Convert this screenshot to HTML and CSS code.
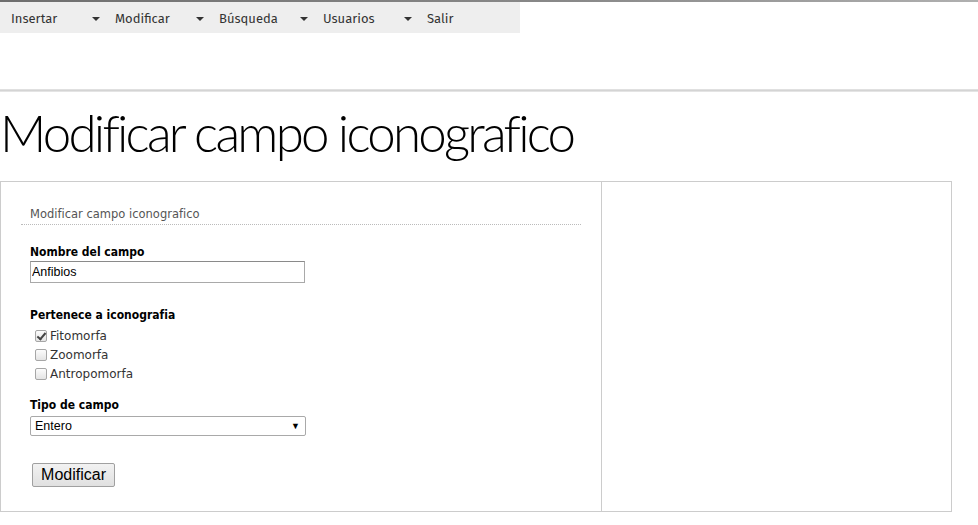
FILE: index.html
```html
<!DOCTYPE html>
<html lang="es">
<head>
<meta charset="utf-8">
<title>Modificar campo iconografico</title>
<link rel="stylesheet" href="styles.css">
</head>
<body>
<div class="topline"></div>
<header class="header">
  <nav class="menu">
    <div class="menu-item"><span>Insertar</span><span class="caret"></span></div>
    <div class="menu-item"><span>Modificar</span><span class="caret"></span></div>
    <div class="menu-item"><span>Búsqueda</span><span class="caret"></span></div>
    <div class="menu-item"><span>Usuarios</span><span class="caret"></span></div>
    <div class="menu-item"><span>Salir</span></div>
  </nav>
</header>
<div class="divider"></div>
<h1 class="title">Modificar campo iconografico</h1>
<div class="box">
  <div class="main">
    <form class="form">
      <div class="legend">Modificar campo iconografico</div>
      <label class="label">Nombre del campo</label>
      <input class="text" type="text" value="Anfibios">
      <label class="label label-gap">Pertenece a iconografia</label>
      <div class="checks">
        <div class="check"><input class="cb" type="checkbox" checked><span>Fitomorfa</span></div>
        <div class="check"><input class="cb" type="checkbox"><span>Zoomorfa</span></div>
        <div class="check"><input class="cb" type="checkbox"><span>Antropomorfa</span></div>
      </div>
      <label class="label label-gap2">Tipo de campo</label>
      <div class="select"><span>Entero</span><span class="sel-arrow">▼</span></div>
      <button class="btn" type="button">Modificar</button>
    </form>
  </div>
  <div class="side"></div>
</div>
</body>
</html>
```
FILE: styles.css
```css
html, body {
  margin: 0;
  padding: 0;
  background: #fff;
}
.topline {
  height: 2px;
  background: linear-gradient(to right, #6e6e6e, #8a8a8a 60%, #b0b0b0);
}
.header {
  height: 87px;
}
.menu {
  display: flex;
  width: 520px;
  height: 31px;
  background: #eeeeee;
  font-family: "Fira Sans", "Open Sans", "Noto Sans", sans-serif;
  font-size: 13px;
  color: #333;
}
.menu-item {
  width: 104px;
  display: flex;
  align-items: center;
  position: relative;
  padding-left: 11px;
  padding-top: 2px;
  box-sizing: border-box;
}
.caret {
  position: absolute;
  left: 92px;
  top: 15px;
  width: 0;
  height: 0;
  border-left: 4px solid transparent;
  border-right: 4px solid transparent;
  border-top: 4px solid #333;
}
.divider {
  height: 3px;
  background: linear-gradient(to bottom, #e6e6e6, #d4d4d4, #ececec);
}
.title {
  margin: 17px 0 0 0;
  height: 72px;
  font-family: "Lato", sans-serif;
  font-weight: 300;
  font-size: 51px;
  line-height: 48px;
  color: #000;
  letter-spacing: -2.75px;
}
.box {
  display: flex;
  width: 952px;
  height: 331px;
  border: 1px solid #cccccc;
  box-sizing: border-box;
}
.main {
  width: 601px;
  border-right: 1px solid #cccccc;
  padding: 21px 20px 0 20px;
  box-sizing: border-box;
}
.side {
  flex: 1;
}
.form {
  display: flex;
  flex-direction: column;
  align-items: flex-start;
  font-family: "DejaVu Sans", Verdana, sans-serif;
  font-size: 12px;
}
.legend {
  align-self: stretch;
  color: #555;
  font-size: 11.5px;
  padding: 4px 0 3px 9px;
  border-bottom: 1px dotted #bbb;
  margin-bottom: 19px;
}
.label {
  font-family: "DejaVu Sans Condensed", "DejaVu Sans", sans-serif;
  font-stretch: condensed;
  font-weight: bold;
  color: #000;
  margin-left: 9px;
  font-size: 12px;
  line-height: 16px;
}
.label-gap { margin-top: 24px; }
.label-gap2 { margin-top: 14px; }
.text {
  margin: 1px 0 0 9px;
  width: 275px;
  height: 22px;
  box-sizing: border-box;
  border: 1px solid #a9a9a9;
  border-top-color: #8a8a8a;
  padding: 1px 1px;
  font-family: "Liberation Sans", Arial, sans-serif;
  font-size: 12.5px;
  color: #000;
}
.checks {
  margin-top: 3px;
  display: flex;
  flex-direction: column;
}
.check {
  display: flex;
  align-items: center;
  height: 19px;
  margin-left: 13px;
  color: #333;
}
.cb {
  -webkit-appearance: none;
  appearance: none;
  margin: 0 3px 0 1px;
  width: 12px;
  height: 12px;
  border: 1px solid #a6a6a6;
  border-radius: 2px;
  background: linear-gradient(to bottom, #fcfcfc, #e4e4e4);
  position: relative;
  box-sizing: border-box;
}
.cb:checked::after {
  content: "";
  position: absolute;
  left: 3px;
  top: 0px;
  width: 3px;
  height: 7px;
  border-right: 2px solid #444;
  border-bottom: 2px solid #444;
  transform: rotate(40deg);
}
.select {
  margin: 3px 0 0 9px;
  width: 276px;
  height: 20px;
  box-sizing: border-box;
  border: 1px solid #a9a9a9;
  border-radius: 2px;
  display: flex;
  align-items: center;
  justify-content: space-between;
  padding: 0 5px 0 4px;
  font-family: "Liberation Sans", Arial, sans-serif;
  font-size: 12.5px;
  color: #000;
}
.sel-arrow {
  font-size: 9px;
}
.btn {
  margin: 27px 0 0 11px;
  width: 83px;
  height: 24px;
  font-family: "Liberation Sans", Arial, sans-serif;
  font-size: 16px;
  color: #000;
  background: linear-gradient(to bottom, #f2f2f2, #e0e0e0);
  border: 1px solid #a0a0a0;
  border-radius: 2px;
  padding: 0;
}
```
